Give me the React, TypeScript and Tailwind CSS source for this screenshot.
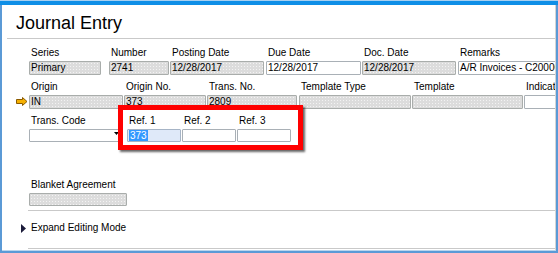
import React from "react";

const grayBox =
  "border border-[#a9adab] rounded-[1px] bg-[#dcdcdc] bg-[image:radial-gradient(circle,#f3f3f3_0.6px,transparent_0.8px)] bg-size-[3px_3px] pl-[1px] whitespace-nowrap overflow-hidden";
const whiteBox =
  "border border-[#a9b0b6] rounded-[1px] bg-white pl-[1px] whitespace-nowrap overflow-hidden";

function Field({
  label,
  value,
  gray,
  className,
  boxClass,
  h = "h-[14px] leading-[12px]",
  children,
}: {
  label: string;
  value?: string;
  gray?: boolean;
  className: string;
  boxClass?: string;
  h?: string;
  children?: React.ReactNode;
}) {
  return (
    <div className={"flex flex-col shrink-0 " + className}>
      <div className="h-[12px] pl-[2px] leading-[12px] whitespace-nowrap overflow-hidden">{label}</div>
      <div className={"mt-[2px] " + h + " " + (boxClass ?? (gray ? grayBox : whiteBox))}>
        {children ?? value}
      </div>
    </div>
  );
}

export default function App() {
  return (
    <div className="w-[558px] h-[253px] bg-white overflow-hidden relative flex flex-col font-['Liberation_Sans',Arial,sans-serif] text-[10px] leading-[12px] text-black">
      <div className="h-px shrink-0 bg-[#a7d0f1]" />
      <div className="h-[4px] shrink-0 bg-[#0f8fe7]" />
      <div className="flex-1 flex flex-col border-l-2 border-r-2 border-b-2 border-[#5b9ad6] min-h-0">
        <div className="flex-1 flex flex-col border-r border-[#d4d4d4] overflow-hidden">
          {/* Title */}
          <div className="mt-[7px] pl-[14px] text-[18px] leading-[22px]">Journal Entry</div>
          <div className="mt-[4px] ml-[5px] h-px bg-[#c9c9c9] shrink-0" />

          {/* Row 1 */}
          <div className="mt-[8px] pl-[27px] flex">
            <Field label="Series" value="Primary" gray className="w-[72px]" />
            <Field label="Number" value="2741" gray className="ml-[8px] w-[60px]" />
            <Field label="Posting Date" value="12/28/2017" gray className="ml-[1px] w-[94px]" />
            <Field label="Due Date" value="12/28/2017" className="ml-[2px] w-[95px]" />
            <Field label="Doc. Date" value="12/28/2017" gray className="ml-[1px] w-[94px]" />
            <Field label="Remarks" value="A/R Invoices - C20000" className="ml-[2px] w-[130px]" />
          </div>

          {/* Row 2 */}
          <div className="mt-[6px] pl-[14px] flex items-end">
            <svg width="12" height="9" viewBox="0 0 12 9" className="shrink-0 mb-[3px] mr-[1px]">
              <path
                d="M0.5 2.5 H6.5 V0.5 L11 4.5 L6.5 8.5 V6.5 H0.5 Z"
                fill="#f5b000"
                stroke="#8a5a00"
                strokeWidth="1"
                strokeLinejoin="miter"
              />
            </svg>
            <Field label="Origin" value="IN" gray className="w-[94px]" />
            <Field label="Origin No." value="373" gray className="ml-[1px] w-[82px]" />
            <Field label="Trans. No." value="2809" gray className="ml-[1px] w-[90px]" />
            <Field label="Template Type" value="" gray className="ml-[2px] w-[112px]" />
            <Field label="Template" value="" gray className="ml-[1px] w-[111px]" />
            <Field label="Indicator" value="" className="ml-[1px] w-[60px]" />
          </div>

          {/* Row 3 */}
          <div className="mt-[6px] pl-[27px] flex">
            <Field
              label="Trans. Code"
              className="w-[94px]"
              h="h-[13px] leading-[11px]"
              boxClass={whiteBox + " flex justify-end items-start pr-[3px] pt-[2px]"}
            >
              <svg width="5" height="3" viewBox="0 0 5 3" className="block">
                <path d="M0 0 H5 L2.5 3 Z" fill="#000" />
              </svg>
            </Field>
            <Field
              label="Ref. 1"
              className="ml-[4px] w-[54px]"
              h="h-[13px] leading-[11px]"
              boxClass="border border-[#a6b4c6] rounded-[1px] bg-[#dfe9f9] pl-[1px] whitespace-nowrap overflow-hidden"
            >
              <span className="bg-[#3399ff] text-white px-[1px]">373</span>
            </Field>
            <Field label="Ref. 2" value="" h="h-[13px] leading-[11px]" className="ml-[1px] w-[54px]" />
            <Field label="Ref. 3" value="" h="h-[13px] leading-[11px]" className="ml-[1px] w-[54px]" />
          </div>

          {/* Blanket Agreement */}
          <div className="mt-[37px] pl-[27px] flex">
            <Field label="Blanket Agreement" value="" gray h="h-[13px] leading-[11px]" className="w-[98px]" />
          </div>

          <div className="mt-[4px] ml-[26px] h-px bg-[#c9c9c9] shrink-0" />

          {/* Expand */}
          <div className="mt-[11px] pl-[19px] flex items-center h-[12px]">
            <svg width="5" height="9" viewBox="0 0 5 9" className="shrink-0">
              <path d="M0 0 L5 4.5 L0 9 Z" fill="#1b1b3a" />
            </svg>
            <span className="ml-[5px] leading-[12px]">Expand Editing Mode</span>
          </div>

          <div className="mt-[14px] ml-[26px] h-px bg-[#c9c9c9] shrink-0" />
        </div>
        <div className="h-px bg-[#b9d5ee] shrink-0" />
      </div>

      {/* Red annotation frame */}
      <div className="absolute left-[118px] top-[105px] w-[185px] h-[45px] border-[5px] border-[#ff0000] shadow-[2px_2px_2px_rgba(0,0,0,0.6)] pointer-events-none" />
    </div>
  );
}
